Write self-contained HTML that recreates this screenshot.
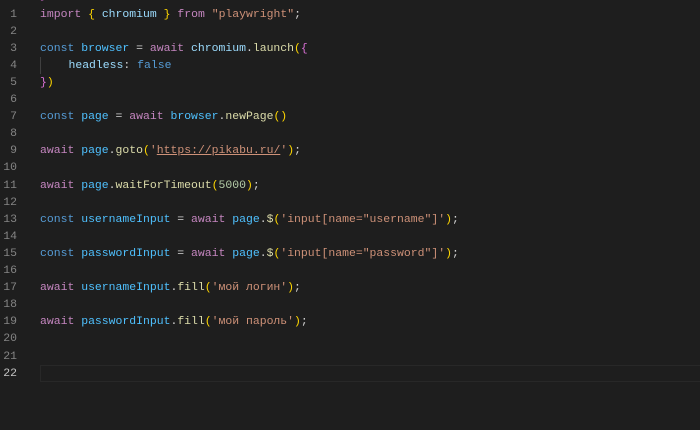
<!DOCTYPE html><html><head><style>
body{margin:0;background:#1e1e1e;width:700px;height:430px;overflow:hidden;font-family:"Liberation Mono","DejaVu Sans Mono",monospace;font-size:11.45px;}
.l{position:absolute;left:0;height:17.1px;line-height:17.1px;white-space:pre;width:700px}
.n{position:absolute;left:0;width:17px;text-align:right;color:#858585}
.c{position:absolute;left:40px;color:#d4d4d4}
.k{color:#c586c0}.b{color:#569cd6}.v{color:#9cdcfe}.f{color:#dcdcaa}.s{color:#ce9178}.g{color:#ffd700}.p{color:#da70d6}.w{color:#4fc1ff}
</style></head><body>
<div class="l" style="top:-12.6px"><span class="c"><span class="p">}</span></span></div>
<div class="l" style="top:5.5px"><span class="n">1</span><span class="c"><span class="k">import</span> <span class="g">{</span> <span class="v">chromium</span> <span class="g">}</span> <span class="k">from</span> <span class="s">"playwright"</span>;</span></div>
<div class="l" style="top:22.6px"><span class="n">2</span></div>
<div class="l" style="top:39.7px"><span class="n">3</span><span class="c"><span class="b">const</span> <span class="w">browser</span> = <span class="k">await</span> <span class="v">chromium</span>.<span class="f">launch</span><span class="g">(</span><span class="p">{</span></span></div>
<div class="l" style="top:56.8px"><span class="n">4</span><span class="c" style="border-left:1px solid #404040">    <span class="v">headless</span>: <span class="b">false</span></span></div>
<div class="l" style="top:73.9px"><span class="n">5</span><span class="c"><span class="p">}</span><span class="g">)</span></span></div>
<div class="l" style="top:91px"><span class="n">6</span></div>
<div class="l" style="top:108.1px"><span class="n">7</span><span class="c"><span class="b">const</span> <span class="w">page</span> = <span class="k">await</span> <span class="w">browser</span>.<span class="f">newPage</span><span class="g">()</span></span></div>
<div class="l" style="top:125.2px"><span class="n">8</span></div>
<div class="l" style="top:142.3px"><span class="n">9</span><span class="c"><span class="k">await</span> <span class="w">page</span>.<span class="f">goto</span><span class="g">(</span><span class="s">'<u>https://pikabu.ru/</u>'</span><span class="g">)</span>;</span></div>
<div class="l" style="top:159.4px"><span class="n">10</span></div>
<div class="l" style="top:176.5px"><span class="n">11</span><span class="c"><span class="k">await</span> <span class="w">page</span>.<span class="f">waitForTimeout</span><span class="g">(</span><span style="color:#b5cea8">5000</span><span class="g">)</span>;</span></div>
<div class="l" style="top:193.6px"><span class="n">12</span></div>
<div class="l" style="top:210.7px"><span class="n">13</span><span class="c"><span class="b">const</span> <span class="w">usernameInput</span> = <span class="k">await</span> <span class="w">page</span>.<span class="f">$</span><span class="g">(</span><span class="s">'input[name="username"]'</span><span class="g">)</span>;</span></div>
<div class="l" style="top:227.8px"><span class="n">14</span></div>
<div class="l" style="top:244.9px"><span class="n">15</span><span class="c"><span class="b">const</span> <span class="w">passwordInput</span> = <span class="k">await</span> <span class="w">page</span>.<span class="f">$</span><span class="g">(</span><span class="s">'input[name="password"]'</span><span class="g">)</span>;</span></div>
<div class="l" style="top:262px"><span class="n">16</span></div>
<div class="l" style="top:279.1px"><span class="n">17</span><span class="c"><span class="k">await</span> <span class="w">usernameInput</span>.<span class="f">fill</span><span class="g">(</span><span class="s">'мой логин'</span><span class="g">)</span>;</span></div>
<div class="l" style="top:296.2px"><span class="n">18</span></div>
<div class="l" style="top:313.3px"><span class="n">19</span><span class="c"><span class="k">await</span> <span class="w">passwordInput</span>.<span class="f">fill</span><span class="g">(</span><span class="s">'мой пароль'</span><span class="g">)</span>;</span></div>
<div class="l" style="top:330.4px"><span class="n">20</span></div>
<div class="l" style="top:347.5px"><span class="n">21</span></div>
<div style="position:absolute;left:40px;top:364.6px;width:660px;height:15px;border:1px solid #282828;border-right:none"></div>
<div class="l" style="top:364.6px"><span class="n" style="color:#c6c6c6">22</span></div>
</body></html>
